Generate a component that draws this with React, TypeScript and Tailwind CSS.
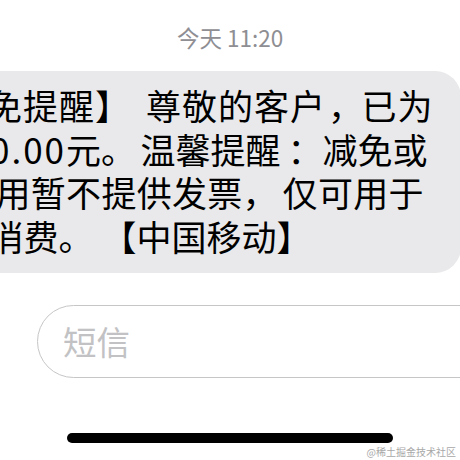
import React from "react";

const cjk = { fontFamily: '"Noto Sans CJK SC", "Noto Sans", sans-serif' };

export default function App() {
  return (
    <div
      className="relative w-[460px] h-[460px] overflow-hidden bg-white"
      style={cjk}
    >
      <div className="pt-[23px] h-[71px] text-center text-[22.5px] leading-[28px] text-[#8e8e93]">
        今天 11:20
      </div>
      <div className="-ml-[60px] w-[521px] rounded-[26px] bg-[#e9e9eb] pt-[12px] pb-[16px] overflow-hidden">
        <div className="pl-[60px] text-[35px] leading-[43.5px] text-black whitespace-nowrap">
          <div className="-ml-[13px] tracking-[1px]">
            免提醒<span className="inline-block w-[51px]">】</span>尊敬的客户<span className="inline-block w-[35.5px] pl-[2px]">，</span>已为
          </div>
          <div className="-ml-[10px]">
            <span className="tracking-[2px]">0.00</span>元<span className="inline-block w-[39.5px]">。</span>温馨提醒<span className="inline-block w-[42px] pl-[7px]">：</span>减免或
          </div>
          <div className="-ml-[4.5px] tracking-[0.3px]">
            用暂不提供发票<span className="inline-block w-[40px]">，</span>仅可用于
          </div>
          <div className="-ml-[11.5px]">
            消费<span className="inline-block w-[43px]">。</span>【中国移动】
          </div>
        </div>
      </div>
      <div className="mt-[32px] ml-[37px] w-[460px] h-[73px] rounded-full border-[1.5px] border-[#c6c6c8] flex items-center pl-[25px]">
        <span className="text-[33.5px] text-[#c2c2c4]">短信</span>
      </div>
      <div className="mt-[55px] mx-auto w-[326px] h-[10px] rounded-full bg-black" />
      <div className="absolute right-[4px] bottom-[2px] text-[10px] leading-[12px] text-[#a8a8a8]">
        @稀土掘金技术社区
      </div>
    </div>
  );
}
